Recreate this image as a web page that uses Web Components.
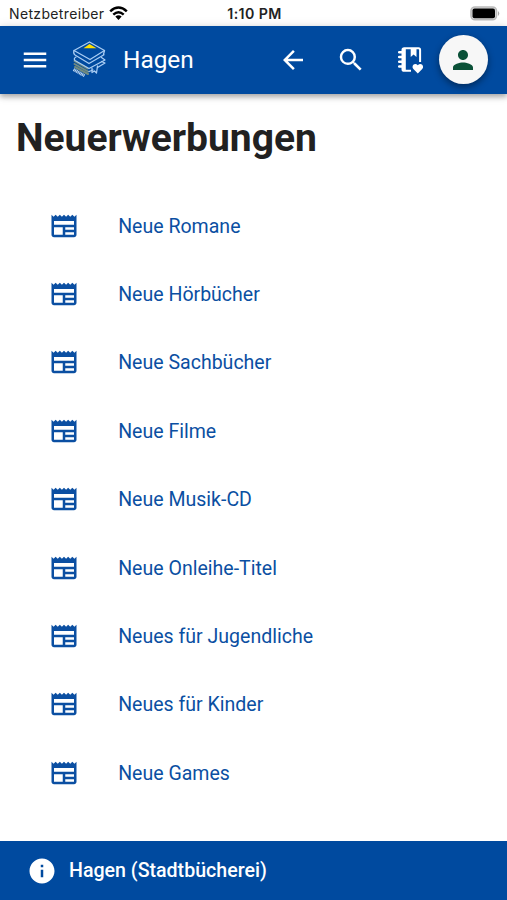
<!DOCTYPE html>
<html lang="de">
<head>
<meta charset="utf-8">
<title>Neuerwerbungen</title>
<style>
html,body{margin:0;height:100%;background:#fff}
body{font-family:Roboto,"Liberation Sans",sans-serif;overflow:hidden}
</style>
</head>
<body>
<library-app></library-app>
<script>
const define=(name,html,init)=>customElements.define(name,class extends HTMLElement{
  constructor(){super();this.attachShadow({mode:'open'})}
  connectedCallback(){
    const t=document.createElement('template');
    t.innerHTML=html;
    this.shadowRoot.replaceChildren(t.content.cloneNode(true));
    if(init)init(this);
  }
});

const ICONS={
  menu:'M3 18h18v-2H3v2zm0-5h18v-2H3v2zm0-7v2h18V6H3z',
  back:'M20 11H7.83l5.59-5.59L12 4l-8 8 8 8 1.41-1.41L7.83 13H20v-2z',
  search:'M15.5 14h-.79l-.28-.27A6.471 6.471 0 0 0 16 9.500A6.5 6.5 0 1 0 9.500 16c1.61 0 3.09-.59 4.23-1.57l.27.28v.79l5 4.99L20.490 19l-4.990-5zm-6 0C7.010 14 5 11.990 5 9.500S7.010 5 9.500 5 14 7.010 14 9.500 11.990 14 9.500 14z',
  person:'M12 12c2.210 0 4-1.790 4-4s-1.790-4-4-4-4 1.790-4 4 1.790 4 4 4zm0 2c-2.670 0-8 1.340-8 4v2h16v-2c0-2.660-5.330-4-8-4z',
  info:'M12 2C6.480 2 2 6.480 2 12s4.480 10 10 10 10-4.480 10-10S17.520 2 12 2zm1 15h-2v-6h2v6zm0-8h-2V7h2v2z',
  news:'M22 3l-1.670 1.670L18.670 3 17 4.670 15.330 3l-1.660 1.670L12 3l-1.670 1.670L8.670 3 7 4.670 5.330 3 3.670 4.670 2 3v16c0 1.100.9 2 2 2h16c1.100 0 2-.9 2-2V3zM11 19H4v-6h7v6zm9 0h-7v-2h7v2zm0-4h-7v-2h7v2zm0-4H4V8h16v3z'
};
define('app-icon',`<style>:host{display:block;flex:none;width:30px;height:30px}svg{display:block;width:100%;height:100%;fill:currentColor}</style><svg viewBox="0 0 24 24"><path/></svg>`,
  el=>el.shadowRoot.querySelector('path').setAttribute('d',ICONS[el.getAttribute('name')]));

define('notebook-icon',`<style>:host{display:block;flex:none;width:26px;height:28px}svg{display:block}</style>
<svg width="26" height="28" viewBox="0 0 26 28" fill="none" stroke="#fff">
<path d="M13 24.800H6.200Q4.500 24.800 4.500 23.200V4Q4.500 2.300 6.200 2.300H20.500Q22.100 2.300 22.100 4V16" stroke-width="2"/>
<path d="M6.400 2V25" stroke-width="2.800"/>
<path d="M1.200 6.200H5M1.200 11H5M1.200 15.800H5M1.200 20.600H5" stroke-width="2.500" stroke-linecap="round"/>
<path d="M12.700 2.500H18.500V11L15.600 8.400L12.700 11Z" fill="#fff" stroke="none"/>
<path d="M19.800 27.400L15.400 23C12.700 20 16.900 16 19.800 19.300C22.700 16 26.900 20 24.200 23Z" fill="#fff" stroke="none"/>
</svg>`);

define('books-logo',`<style>:host{display:block;flex:none;width:36px;height:38px}svg{display:block}</style>
<svg width="36" height="38" viewBox="0 0 36 38" fill="none" stroke="#a9cdf4" stroke-width="1.250" stroke-linejoin="round" stroke-linecap="round">
<path d="M2.500 20L15.500 27.500M2.500 23L16 30.500M3 26L16 33" stroke="#718b80" stroke-width="2"/>
<path d="M1.500 28.500L12.500 34.800" stroke="#b9d3ee" stroke-width="3" stroke-dasharray="1.200 .45" stroke-linecap="butt"/>
<path d="M2 9.500L17.500 1L32.500 9.500L18 18.500Z"/>
<path d="M11.500 7.300L17.500 3L24.500 7.300Z" fill="#ffdf00" stroke="none"/>
<path d="M2 9.500Q1 12.500 3 14L17 22.500L32 13.700M32.500 9.500L31.500 13.500"/>
<path d="M4 16Q1.200 17.500 3 19.500L17 27.500L33 19L29.500 16.500"/>
<path d="M17 30.500L21 29M25.500 26.500L33 22L29.500 20.500"/>
<path d="M20 27V31.500L22.500 30L24.500 32L25.500 25"/>
</svg>`);

define('status-bar',`<style>
:host{display:flex;height:26px;box-sizing:border-box;padding:0 7px 0 9px;align-items:center;background:#fff;color:#222;font:14px/26px Inter,"Liberation Sans",sans-serif}
.left,.right{flex:1;display:flex;align-items:center;gap:5px}.right{justify-content:flex-end}
.carrier{letter-spacing:.350px;padding-top:2px}.time{font-weight:600;font-size:14.200px;letter-spacing:.4px;padding-top:2px}svg{display:block}.left svg{margin-bottom:1px}
</style>
<div class="left"><span class="carrier">Netzbetreiber</span>
<svg width="19" height="14" viewBox="0 0 19 14" fill="none" stroke="#000" stroke-width="2.500"><path d="M1.200 5.300Q9.500-2.300 17.800 5.300M4.300 8.600Q9.500 3.900 14.700 8.600"/><path d="M6.300 10.600Q9.500 8 12.700 10.600L9.500 14Z" fill="#000" stroke="none"/></svg></div>
<span class="time">1:10 PM</span>
<div class="right"><svg width="30" height="15" viewBox="0 0 30 15"><rect x="1" y="1" width="25.500" height="12.800" rx="4" fill="#ddd" stroke="#bbb" stroke-width="1.600"/><rect x="2.500" y="2.500" width="22.500" height="9.800" rx="2"/><path d="M28 5Q30.500 7.500 28 10Z" fill="#aaa"/></svg></div>`);

define('app-bar',`<style>
:host{display:flex;box-sizing:border-box;height:68px;align-items:center;padding:0 19.500px 0 20px;background:#004a9f;color:#fff;box-shadow:0 3px 5px rgba(0,0,0,.27),0 1px 10px rgba(0,0,0,.15);position:relative}
app-icon,books-logo,notebook-icon,.avatar{margin-top:-1px}
books-logo{margin-left:22px}
.title{font-size:24.400px;margin-left:15px;flex:1;line-height:32px}
.search{margin-left:28px}notebook-icon{margin:-1px 15px 0 32px}
.avatar{width:49px;height:49px;border-radius:50%;background:#f7f7f7;color:#0b5138;display:grid;place-items:center;box-shadow:0 3px 7px rgba(0,0,0,.42)}
.avatar app-icon{margin:0}
</style>
<app-icon name="menu"></app-icon><books-logo></books-logo><span class="title"><slot></slot></span>
<app-icon name="back"></app-icon><app-icon class="search" name="search"></app-icon><notebook-icon></notebook-icon>
<div class="avatar"><app-icon name="person"></app-icon></div>`);

define('news-item',`<style>
:host{display:flex;height:68.400px;align-items:center;padding-left:49px;gap:39.200px;color:#0b4fa2;font-size:19.550px;line-height:28px}
span{padding-top:2px}
</style><app-icon name="news"></app-icon><span><slot></slot></span>`);

define('bottom-bar',`<style>
:host{display:flex;box-sizing:border-box;height:59px;align-items:center;gap:12px;padding-left:27px;background:#004a9f;color:#fff;font-size:19.600px;font-weight:500;line-height:28px}
</style><app-icon name="info"></app-icon><span><slot></slot></span>`);

define('library-app',`<style>
:host{display:flex;flex-direction:column;height:900px;width:507px}
main{flex:1}h1{margin:20px 0 29.500px 16px;font-size:39px;line-height:48px;font-weight:700;color:#212121}
</style>
<status-bar></status-bar><app-bar>Hagen</app-bar>
<main><h1>Neuerwerbungen</h1>
<news-item>Neue Romane</news-item><news-item>Neue Hörbücher</news-item><news-item>Neue Sachbücher</news-item><news-item>Neue Filme</news-item><news-item>Neue Musik-CD</news-item><news-item>Neue Onleihe-Titel</news-item><news-item>Neues für Jugendliche</news-item><news-item>Neues für Kinder</news-item><news-item>Neue Games</news-item>
</main><bottom-bar>Hagen (Stadtbücherei)</bottom-bar>`);
</script>
</body>
</html>
